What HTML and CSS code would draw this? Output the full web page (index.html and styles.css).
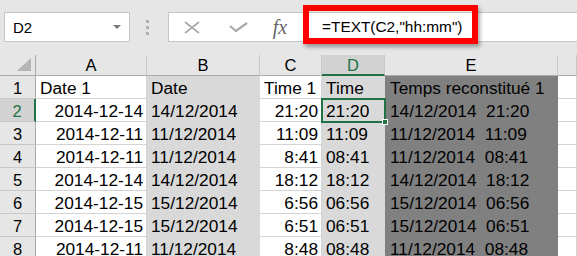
FILE: index.html
```html
<!DOCTYPE html>
<html lang="fr">
<head>
  <meta charset="UTF-8">
  <title>Temps reconstitué</title>
  <link rel="stylesheet" href="styles.css">
</head>
<body>

  <div class="toolbar">
    <div class="namebox">
      <span>D2</span>
      <span class="arrow"></span>
    </div>
    <div class="grip"><i></i><i></i><i></i></div>
    <div class="formula">
      <span class="slot">
        <svg width="16" height="13" viewBox="0 0 16 13"><path d="M1 1 L15 12 M15 1 L1 12" stroke="#a9a9a9" stroke-width="1.6" fill="none"/></svg>
      </span>
      <span class="slot">
        <svg width="19" height="10" viewBox="0 0 19 10"><path d="M1 4 L7 9 L18 1" stroke="#a9a9a9" stroke-width="2.2" fill="none"/></svg>
      </span>
      <span class="slot fx">fx</span>
      <span class="ftext">=TEXT(C2,"hh:mm")</span>
      <div class="callout"></div>
    </div>
  </div>

  <div class="sheet">
    <div class="corner"><span></span></div>
    <div class="ch">A</div>
    <div class="ch">B</div>
    <div class="ch">C</div>
    <div class="ch sel">D</div>
    <div class="ch">E</div>
    <div class="ch"></div>

    <div class="rh">1</div>
    <div class="c">Date 1</div>
    <div class="c lt">Date</div>
    <div class="c">Time 1</div>
    <div class="c lt">Time</div>
    <div class="c dk">Temps reconstitué 1</div>
    <div class="c"></div>

    <div class="rh sel">2</div>
    <div class="c r">2014-12-14</div>
    <div class="c lt">14/12/2014</div>
    <div class="c r">21:20</div>
    <div class="c lt active">21:20<span class="handle"></span></div>
    <div class="c dk">14/12/2014&nbsp;&nbsp;21:20</div>
    <div class="c"></div>

    <div class="rh">3</div>
    <div class="c r">2014-12-11</div>
    <div class="c lt">11/12/2014</div>
    <div class="c r">11:09</div>
    <div class="c lt">11:09</div>
    <div class="c dk">11/12/2014&nbsp;&nbsp;11:09</div>
    <div class="c"></div>

    <div class="rh">4</div>
    <div class="c r">2014-12-11</div>
    <div class="c lt">11/12/2014</div>
    <div class="c r">8:41</div>
    <div class="c lt">08:41</div>
    <div class="c dk">11/12/2014&nbsp;&nbsp;08:41</div>
    <div class="c"></div>

    <div class="rh">5</div>
    <div class="c r">2014-12-14</div>
    <div class="c lt">14/12/2014</div>
    <div class="c r">18:12</div>
    <div class="c lt">18:12</div>
    <div class="c dk">14/12/2014&nbsp;&nbsp;18:12</div>
    <div class="c"></div>

    <div class="rh">6</div>
    <div class="c r">2014-12-15</div>
    <div class="c lt">15/12/2014</div>
    <div class="c r">6:56</div>
    <div class="c lt">06:56</div>
    <div class="c dk">15/12/2014&nbsp;&nbsp;06:56</div>
    <div class="c"></div>

    <div class="rh">7</div>
    <div class="c r">2014-12-15</div>
    <div class="c lt">15/12/2014</div>
    <div class="c r">6:51</div>
    <div class="c lt">06:51</div>
    <div class="c dk">15/12/2014&nbsp;&nbsp;06:51</div>
    <div class="c"></div>

    <div class="rh">8</div>
    <div class="c r">2014-12-11</div>
    <div class="c lt">11/12/2014</div>
    <div class="c r">8:48</div>
    <div class="c lt">08:48</div>
    <div class="c dk">11/12/2014&nbsp;&nbsp;08:48</div>
    <div class="c"></div>
  </div>

</body>
</html>
```

FILE: styles.css
```css
* {
  box-sizing: border-box;
}

body {
  margin: 0;
  background-color: #e6e6e6;
  font-family: "Liberation Sans", Arial, sans-serif;
  color: #000;
  overflow: hidden;
}

/* formula bar */

.toolbar {
  display: flex;
  align-items: flex-start;
  height: 55px;
  padding: 12px 0 0 4px;
}

.namebox {
  display: flex;
  align-items: center;
  justify-content: space-between;
  width: 126px;
  height: 30px;
  padding: 0 8px 0 8px;
  background-color: #fff;
  border: 1px solid #c6c6c6;
  font-size: 15px;
}

.arrow {
  width: 0;
  height: 0;
  border-left: 4px solid transparent;
  border-right: 4px solid transparent;
  border-top: 4px solid #7a7a7a;
}

.grip {
  display: flex;
  flex-direction: column;
  gap: 3px;
  width: 38px;
  padding: 8px 0 0 16px;
}

.grip i {
  width: 3px;
  height: 3px;
  background-color: #b0b0b0;
}

.formula {
  position: relative;
  display: flex;
  align-items: center;
  flex: 1;
  height: 30px;
  background-color: #fff;
  border: 1px solid #c6c6c6;
  border-right: none;
}

.slot {
  display: flex;
  justify-content: center;
  align-items: center;
  width: 46px;
  height: 28px;
}

.slot svg {
  display: block;
}

.fx {
  width: 38px;
  font-family: "Liberation Serif", serif;
  font-style: italic;
  font-size: 20px;
  color: #666;
}

.ftext {
  margin-left: 23px;
  font-size: 15.4px;
}

.callout {
  position: absolute;
  left: 134px;
  top: -8px;
  width: 175px;
  height: 39px;
  border: 6px solid #ff0000;
  box-shadow: 2px 3px 4px rgba(0, 0, 0, 0.35);
}

/* grid */

.sheet {
  display: grid;
  grid-template-columns: 36px 111px 113px 62px 63px 173px 1fr;
  grid-template-rows: 21px;
  grid-auto-rows: 23px;
}

.corner {
  display: flex;
  justify-content: flex-end;
  align-items: flex-end;
  padding: 0 4px 4px 0;
  border-right: 1px solid #ababab;
  border-bottom: 1px solid #ababab;
}

.corner span {
  width: 0;
  height: 0;
  border-left: 14px solid transparent;
  border-bottom: 13px solid #b5b5b5;
}

.ch {
  text-align: center;
  font-size: 16.5px;
  line-height: 21px;
  border-right: 1px solid #c8c8c8;
  border-bottom: 1px solid #ababab;
}

.ch.sel {
  background-color: #d2d2d2;
  color: #217346;
  border-bottom: 2px solid #217346;
}

.rh {
  text-align: center;
  font-size: 16.5px;
  line-height: 22px;
  padding-top: 1px;
  border-right: 1px solid #ababab;
  border-bottom: 1px solid #c8c8c8;
}

.rh.sel {
  background-color: #d2d2d2;
  color: #217346;
  border-right: 2px solid #217346;
}

.c {
  background-color: #fff;
  font-size: 17.3px;
  line-height: 22px;
  padding: 1px 3px 0 4px;
  white-space: nowrap;
  overflow: hidden;
  border-right: 1px solid #d4d4d4;
  border-bottom: 1px solid #d4d4d4;
}

.c.r {
  text-align: right;
}

.c.lt {
  background-color: #d9d9d9;
  border-color: #d9d9d9;
}

.c.dk {
  background-color: #808080;
  border-color: #808080;
  padding-left: 5px;
}

.c.active {
  position: relative;
  overflow: visible;
  outline: 2px solid #217346;
  outline-offset: -1px;
  z-index: 1;
}

.handle {
  position: absolute;
  right: -4px;
  bottom: -4px;
  width: 6px;
  height: 6px;
  background-color: #217346;
  border: 1px solid #fff;
}
```
